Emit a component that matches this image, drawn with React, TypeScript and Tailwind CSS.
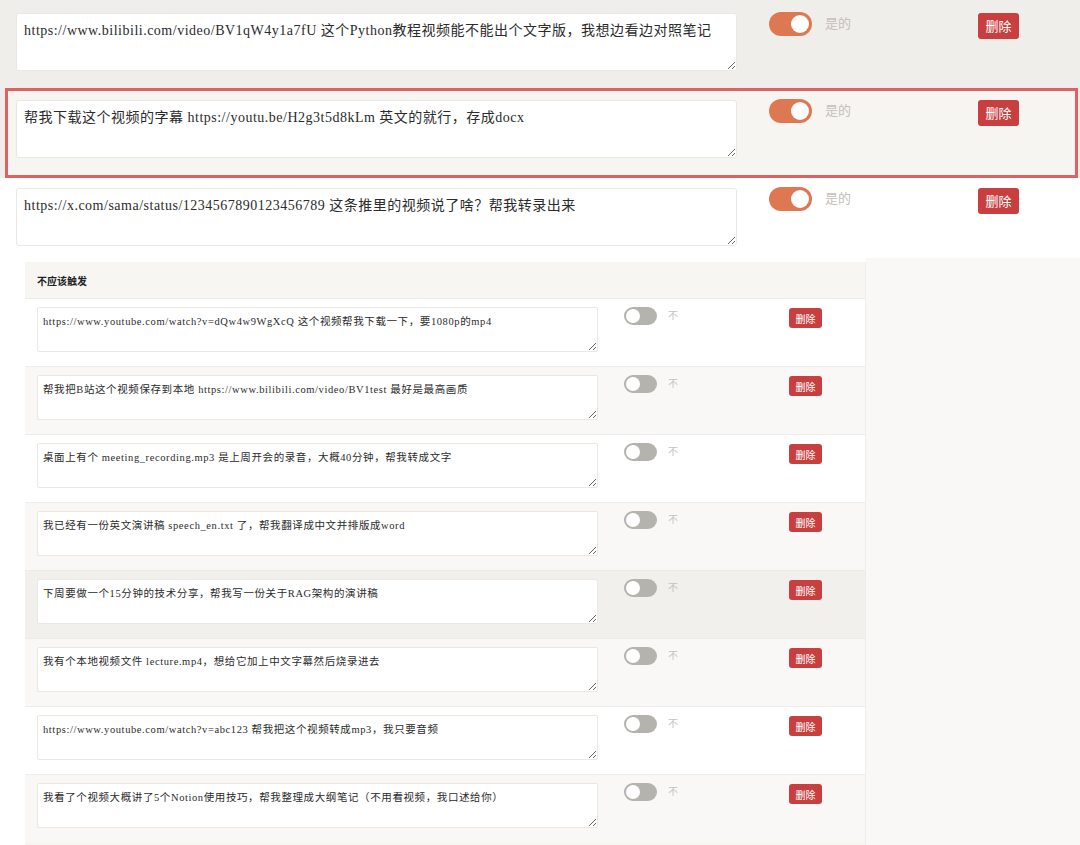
// Trigger test cases: rows of prompts with an expected-trigger switch and a delete button.

const serif = 'font-["Liberation_Serif","Noto_Sans_CJK_SC",serif]';

const shouldTrigger = [
  'https://www.bilibili.com/video/BV1qW4y1a7fU 这个Python教程视频能不能出个文字版，我想边看边对照笔记',
  '帮我下载这个视频的字幕 https://youtu.be/H2g3t5d8kLm 英文的就行，存成docx',
  'https://x.com/sama/status/1234567890123456789 这条推里的视频说了啥？帮我转录出来',
];

const shouldNot = [
  'https://www.youtube.com/watch?v=dQw4w9WgXcQ 这个视频帮我下载一下，要1080p的mp4',
  '帮我把B站这个视频保存到本地 https://www.bilibili.com/video/BV1test 最好是最高画质',
  '桌面上有个 meeting_recording.mp3 是上周开会的录音，大概40分钟，帮我转成文字',
  '我已经有一份英文演讲稿 speech_en.txt 了，帮我翻译成中文并排版成word',
  '下周要做一个15分钟的技术分享，帮我写一份关于RAG架构的演讲稿',
  '我有个本地视频文件 lecture.mp4，想给它加上中文字幕然后烧录进去',
  'https://www.youtube.com/watch?v=abc123 帮我把这个视频转成mp3，我只要音频',
  '我看了个视频大概讲了5个Notion使用技巧，帮我整理成大纲笔记（不用看视频，我口述给你）',
];

function BigRow({ text, variant }: { text: string; variant: 'plain' | 'active' | 'white' }) {
  const wrap =
    variant === 'active'
      ? 'ml-[5px] mr-[2px] h-[90px] border-[3px] border-[#df6262] bg-[#f7f5f2] pl-[8px] pt-[9px]'
      : variant === 'white'
        ? 'h-[80px] bg-white pl-[16px] pt-[10px]'
        : 'h-[88px] bg-[#f0eeea] pl-[16px] pt-[13px]';
  return (
    <div className={`flex items-start ${wrap}`}>
      <textarea
        readOnly
        defaultValue={text}
        className={`h-[58px] w-[721px] shrink-0 rounded-[3px] border border-[#ebe8e3] bg-white px-[7px] pt-[7px] text-[14px] leading-[20px] tracking-[0.5px] text-[#2b2b2b] outline-none ${serif}`}
      />
      <div className="ml-[32px] mt-[-1px] flex h-[24px] w-[43px] items-center justify-end rounded-full bg-[#de7852] px-[3px]">
        <span className="h-[18px] w-[18px] rounded-full bg-white" />
      </div>
      <span className="ml-[13px] mt-[1px] text-[13px] leading-[18px] text-[#c3c0bb] font-['Noto_Sans_CJK_SC',sans-serif]">
        是的
      </span>
      <button className="ml-[127px] flex h-[26px] w-[41px] items-center justify-center rounded-[3px] bg-[#c93f3f] text-[13px] text-white font-['Noto_Sans_CJK_SC',sans-serif]">
        删除
      </button>
    </div>
  );
}

function SmallRow({ text, bg }: { text: string; bg: string }) {
  return (
    <div className={`flex h-[68px] items-start border-t border-[#eeece8] pl-[12px] pt-[8px] ${bg}`}>
      <textarea
        readOnly
        defaultValue={text}
        className={`h-[45px] w-[561px] shrink-0 rounded-[2px] border border-[#ebe8e3] bg-white px-[5px] pt-[6px] text-[10.5px] leading-[15px] tracking-[0.6px] text-[#2b2b2b] outline-none ${serif}`}
      />
      <div className="ml-[26px] flex h-[18px] w-[33px] items-center rounded-full bg-[#b5b3ae] px-[2px]">
        <span className="h-[14px] w-[14px] rounded-full bg-white" />
      </div>
      <span className="ml-[11px] mt-[1px] text-[10px] leading-[14px] text-[#c5c2bd] font-['Noto_Sans_CJK_SC',sans-serif]">
        不
      </span>
      <button className="ml-[111px] mt-[1px] flex h-[20px] w-[33px] items-center justify-center rounded-[3px] bg-[#c93f3f] text-[10px] text-white font-['Noto_Sans_CJK_SC',sans-serif]">
        删除
      </button>
    </div>
  );
}

export default function App() {
  const rowBg = (i: number) =>
    i === 4 ? 'bg-[#f1f0ec]' : i % 2 === 1 ? 'bg-[#f9f8f6]' : 'bg-white';

  return (
    <div className="h-[845px] w-[1080px] overflow-hidden bg-white">
      <div className="bg-[#f0eeea]">
        <BigRow text={shouldTrigger[0]} variant="plain" />
        <BigRow text={shouldTrigger[1]} variant="active" />
        <BigRow text={shouldTrigger[2]} variant="white" />
      </div>
      <div className="flex">
        <div className="w-[25px] shrink-0 bg-white" />
        <div className="mt-[4px] w-[841px] shrink-0 border-r border-[#efede9] bg-[#f7f6f3]">
          <div className="flex h-[36px] items-center pl-[12px] text-[10px] font-bold text-[#222] font-['Noto_Sans_CJK_SC',sans-serif]">
            不应该触发
          </div>
          {shouldNot.map((t, i) => (
            <SmallRow key={i} text={t} bg={rowBg(i)} />
          ))}
        </div>
        <div className="h-[600px] flex-1 bg-[#f9f8f6]" />
      </div>
    </div>
  );
}
